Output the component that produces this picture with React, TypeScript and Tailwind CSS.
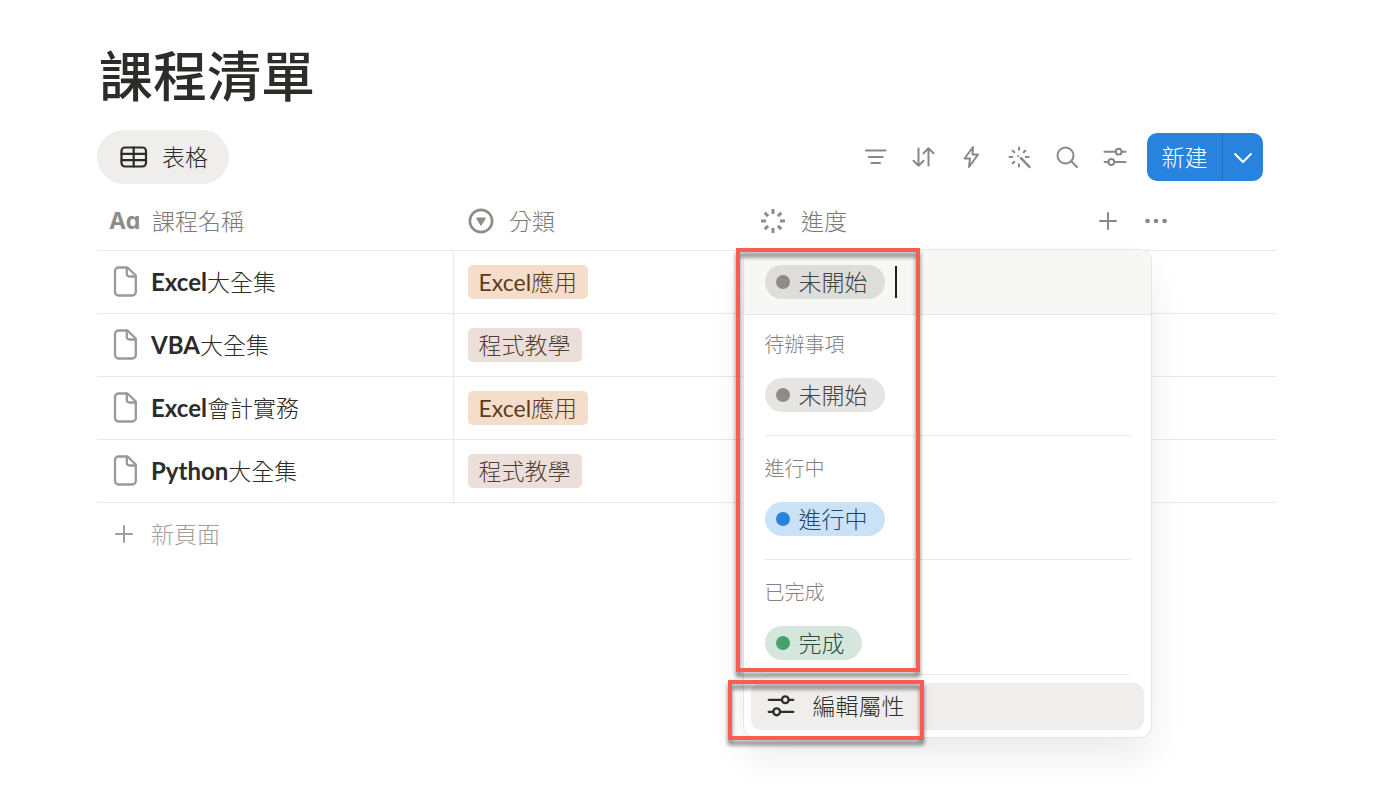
import { ReactNode } from 'react';
import clsx from 'clsx';

const courses = [
  { name: 'Excel大全集', category: 'Excel應用' },
  { name: 'VBA大全集', category: '程式教學' },
  { name: 'Excel會計實務', category: 'Excel應用' },
  { name: 'Python大全集', category: '程式教學' },
];

const categoryColors: Record<string, string> = {
  Excel應用: 'bg-[#f4decb] text-[#5f3a1c]',
  程式教學: 'bg-[#ecdfd9] text-[#523f37]',
};

const statusColors = {
  active: { pill: 'bg-[#deddda] text-[#454441]', dot: 'bg-[#8f8c86]' },
  gray: { pill: 'bg-[#e6e5e3] text-[#454441]', dot: 'bg-[#8f8c86]' },
  blue: { pill: 'bg-[#cae2f7] text-[#26456a]', dot: 'bg-[#2783de]' },
  green: { pill: 'bg-[#d5e6dc] text-[#2a4f3d]', dot: 'bg-[#46a171]' },
};

type StatusColor = keyof typeof statusColors;

const statusGroups: { label: string; status: string; color: StatusColor }[] = [
  { label: '待辦事項', status: '未開始', color: 'gray' },
  { label: '進行中', status: '進行中', color: 'blue' },
  { label: '已完成', status: '完成', color: 'green' },
];

const Icon = ({
  children,
  className = 'size-6',
  stroke = 2,
  viewBox = '0 0 24 24',
}: {
  children: ReactNode;
  className?: string;
  stroke?: number;
  viewBox?: string;
}) => (
  <svg
    aria-hidden="true"
    className={clsx('shrink-0', className)}
    viewBox={viewBox}
    fill="none"
    stroke="currentColor"
    strokeWidth={stroke}
    strokeLinecap="round"
    strokeLinejoin="round">
    {children}
  </svg>
);

const SlidersIcon = ({ className, stroke }: { className?: string; stroke?: number }) => (
  <Icon className={className} stroke={stroke}>
    <path d="M1.500 6.700h11.300M18.600 6.700h3.900M1.500 17h3.900M11.200 17h11.300" />
    <circle cx="15.700" cy="6.700" r="2.900" />
    <circle cx="8.300" cy="17" r="2.900" />
  </Icon>
);

const PlusIcon = () => (
  <Icon>
    <path d="M12 4v16M4 12h16" />
  </Icon>
);

const PageIcon = () => (
  <Icon className="h-8 w-6 text-[#9b9995]" viewBox="0 0 24 32" stroke={2.3}>
    <path d="M5.500 1.500h9L22.800 9.500V26a3.500 3.500 0 0 1-3.500 3.500H5.500A3.500 3.500 0 0 1 2 26V5a3.500 3.500 0 0 1 3.500-3.500z" />
    <path d="M13.800 2V8a2.500 2.500 0 0 0 2.500 2.500h6" />
  </Icon>
);

const tools = [
  {
    label: '篩選',
    icon: <path d="M3 5.500h19.500M5.800 12h14M8.500 18h8.500" />,
  },
  {
    label: '排序',
    icon: <path d="M7.500 3.500v17M2.500 15.700l5 5 5-5M17.500 20.500v-17M12.500 8.300l5-5 5 5" />,
  },
  {
    label: '自動化',
    icon: <path d="M14 2 5.500 13.500h5.500L10 22l9-12.500h-5.500L14 2z" />,
  },
  {
    label: 'AI',
    icon: (
      <>
        <path d="m14 13.200 8.500 8.800" strokeWidth="2.500" />
        <path d="M12 2.500v2.300M12 19.200v2.300M2.500 12h2.800M18.800 12h2.800M5.700 5.700l1.600 1.600M18.300 5.700l-1.600 1.600M5.700 18.300l1.600-1.600M11 11h.1" />
      </>
    ),
  },
  {
    label: '搜尋',
    icon: (
      <>
        <circle cx="10.500" cy="10.500" r="8" />
        <path d="m16.300 16.300 5.700 5.700" />
      </>
    ),
  },
];

// the latin prefix carries its own size and weight
const MixedText = ({ text, className }: { text: string; className: string }) => {
  const latin = text.match(/^[A-Za-z]+/)?.[0] ?? '';
  return (
    <>
      {latin && <span className={className}>{latin}</span>}
      {text.slice(latin.length)}
    </>
  );
};

const StatusPill = ({ color, children }: { color: StatusColor; children: ReactNode }) => (
  <span
    className={clsx(
      'inline-flex h-[34px] items-center gap-[9px] rounded-full pr-[17px] pl-[11px]',
      statusColors[color].pill
    )}>
    <span className={clsx('size-[14px] rounded-full', statusColors[color].dot)} />
    {children}
  </span>
);

const StatusMenu = () => (
  <div className="absolute -top-[2px] -left-[3px] z-10 w-[409px] rounded-xl border border-[#e6e5e3] bg-white shadow-[0_20px_40px_-4px_rgba(0,0,0,0.09)]">
    <div className="flex h-[65px] items-center rounded-t-xl border-b border-[#e6e5e3] bg-[#f7f7f5] pl-[21px]">
      <StatusPill color="active">未開始</StatusPill>
      <input
        aria-label="搜尋狀態"
        className="ml-[10px] h-8 w-40 border-l-2 border-[#1f1f1f] bg-transparent outline-none"
      />
    </div>
    <ul>
      {statusGroups.map(({ label, status, color }) => (
        <li
          key={label}
          className="mx-[21px] border-b border-[#e9e8e6] pt-5 pb-[23px] first:pt-[17px] last:mb-2 last:pb-[14px]">
          <div className="text-[20px] leading-6 text-[#84827e]">{label}</div>
          <button type="button" className="mt-[22px] flex">
            <StatusPill color={color}>{status}</StatusPill>
          </button>
        </li>
      ))}
    </ul>
    <div className="px-[7px] pb-[7px]">
      <button
        type="button"
        className="flex h-[47px] w-full items-center gap-[18px] rounded-[10px] bg-[#efeeec] pl-4 text-[#2f2e2b]">
        <SlidersIcon className="size-7" />
        編輯屬性
      </button>
    </div>
    {/* callouts around the option list and the edit button */}
    <div className="pointer-events-none absolute -top-[2px] -left-2 h-[424px] w-[184px] border-4 border-[#f95d50] drop-shadow-[0_5px_2px_rgba(0,0,0,0.5)]" />
    <div className="pointer-events-none absolute top-[430px] -left-4 h-[60px] w-[196px] border-4 border-[#f95d50] drop-shadow-[0_5px_2px_rgba(0,0,0,0.5)]" />
  </div>
);

const HeaderCell = ({ icon, children }: { icon: ReactNode; children: ReactNode }) => (
  <th className="p-0 text-left font-light">
    <div className="flex items-center">
      {icon}
      {children}
    </div>
  </th>
);

const App = () => {
  return (
    <main className="min-h-screen overflow-hidden bg-white pt-[42px] pr-[124px] pl-[97px] font-[Lato,'Noto_Sans_CJK_TC',sans-serif] text-[23px] leading-[34px] font-light text-[#2c2c2b]">
      <h1 className="pl-[2px] text-[54px] leading-[70px] font-medium">課程清單</h1>

      <div className="mt-[18px] flex items-center justify-between pr-[13px]">
        <button
          type="button"
          className="flex h-[54px] items-center gap-[14px] rounded-full bg-[#efeeec] pr-[21px] pl-[23px]">
          <Icon className="h-[22px] w-7" viewBox="0 0 28 22" stroke={2.2}>
            <rect x="1.500" y="1.500" width="24.500" height="19" rx="3.500" />
            <path d="M1.500 7.800H26M1.500 14.200H26M13.700 1.500v19" />
          </Icon>
          表格
        </button>
        <div className="flex items-center gap-6 text-[#8a8883]">
          {tools.map(({ label, icon }) => (
            <button key={label} type="button" aria-label={label}>
              <Icon>{icon}</Icon>
            </button>
          ))}
          <button type="button" aria-label="設定">
            <SlidersIcon />
          </button>
          <div className="-ml-1 flex h-12 overflow-hidden rounded-[10px] bg-[#2783de] text-white">
            <button type="button" className="w-[76px] border-r border-[#2171c2]">
              新建
            </button>
            <button
              type="button"
              aria-label="更多新建選項"
              className="flex w-10 items-center justify-center">
              <Icon className="size-5" stroke={2.6}>
                <path d="m2.500 8.500 9.500 9.500 9.500-9.500" />
              </Icon>
            </button>
          </div>
        </div>
      </div>

      <table className="mt-2 w-full table-fixed border-collapse">
        <colgroup>
          <col className="w-[356px]" />
          <col className="w-[292px]" />
          <col className="w-[343px]" />
          <col />
        </colgroup>
        <thead>
          <tr className="h-[58px] border-b border-[#e9e8e6] text-[#7d7a75]">
            <HeaderCell
              icon={
                <span
                  aria-hidden="true"
                  className="w-[55px] pl-3 font-[Inter,sans-serif] text-[23px] font-bold text-[#8f8c86] [font-feature-settings:'cv11']">
                  Aa
                </span>
              }>
              課程名稱
            </HeaderCell>
            <HeaderCell
              icon={
                <Icon className="mr-[15px] ml-[15px] size-[26px] text-[#8f8c86]" stroke={2.4}>
                  <circle cx="12" cy="12" r="10.300" />
                  <path d="M8.300 9.500h7.400L12 15.700z" fill="currentColor" strokeWidth="1.300" />
                </Icon>
              }>
              分類
            </HeaderCell>
            <HeaderCell
              icon={
                <Icon className="mr-4 ml-4 size-6 text-[#8f8c86]" stroke={3}>
                  <path
                    strokeLinecap="butt"
                    d="M12 0v5M12 19v5M0 12h5M19 12h5M3.700 3.700l3.400 3.400M16.900 16.900l3.400 3.400M3.700 20.300l3.400-3.400M16.900 7.100l3.400-3.400"
                  />
                </Icon>
              }>
              進度
            </HeaderCell>
            <th className="p-0">
              <div className="flex items-center gap-6 pl-2 text-[#8a8883]">
                <button type="button" aria-label="新增屬性">
                  <PlusIcon />
                </button>
                <button type="button" aria-label="更多">
                  <Icon>
                    <path d="M3.500 12h.1M12 12h.1M20.500 12h.1" strokeWidth="4.500" />
                  </Icon>
                </button>
              </div>
            </th>
          </tr>
        </thead>
        <tbody>
          {courses.map(({ name, category }, index) => (
            <tr key={name} className="h-[63px] border-b border-[#e9e8e6]">
              <td className="border-r border-[#e9e8e6] p-0">
                <a href="#course" className="flex items-center gap-[14px] pl-4">
                  <PageIcon />
                  <span>
                    <MixedText text={name} className="text-[24px] font-bold" />
                  </span>
                </a>
              </td>
              <td className="border-r border-[#e9e8e6] py-0 pr-0 pl-[14px]">
                <span
                  className={clsx(
                    'flex h-[34px] w-fit items-center rounded-[5px] px-[11px]',
                    categoryColors[category]
                  )}>
                  <MixedText text={category} className="font-normal" />
                </span>
              </td>
              <td className="relative p-0">{index === 0 && <StatusMenu />}</td>
              <td className="p-0" />
            </tr>
          ))}
        </tbody>
      </table>

      <button type="button" className="mt-[14px] flex items-center gap-[15px] pl-[15px] text-[#a19f9b]">
        <PlusIcon />
        新頁面
      </button>
    </main>
  );
};

export default App;
